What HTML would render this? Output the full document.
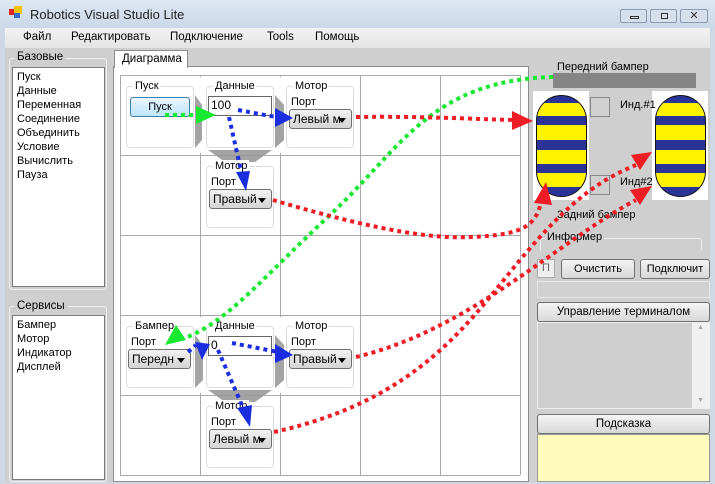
<!DOCTYPE html>
<html><head><meta charset="utf-8"><style>
*{margin:0;padding:0;box-sizing:border-box}
body{width:715px;height:484px;overflow:hidden;background:#cfd9e6;font-family:"Liberation Sans","DejaVu Sans",sans-serif;font-size:11px;color:#000;position:relative}
.a{position:absolute}
.title{left:0;top:0;width:715px;height:30px;background:linear-gradient(#dfe8f3,#c9d7e8)}
.menu{left:5px;top:28px;width:705px;height:20px;background:linear-gradient(#f3f3f3,#e4e4e4)}
.menu span{position:absolute;top:3px;font-size:11.5px}
.body{left:5px;top:48px;width:705px;height:434px;background:#cfcfcf}
.grp{border:1px solid #f0f0f0;border-radius:3px}
.list{background:#fff;border:1px solid #7a7a7a;padding:2px 4px;line-height:14px;font-size:11px}
.blk{background:#fff;border:1px solid #dcdcdc;border-radius:4px}
.cb{height:20px;border:1px solid #707070;border-radius:3px;background:linear-gradient(#f2f2f2,#d4d4d4);font-size:12px;padding:2px 3px;white-space:nowrap;overflow:hidden}
.cb:after{content:"";position:absolute;right:5px;top:8px;border:4px solid transparent;border-top:5px solid #000}
.btn{height:20px;border:1px solid #707070;border-radius:3px;background:linear-gradient(#f4f4f4,#d8d8d8);text-align:center;font-size:11px;line-height:18px}
</style></head><body>
<div class="a title"></div>
<div class="a" style="left:9px;top:9px;width:6px;height:6px;background:#d22"></div>
<div class="a" style="left:14px;top:6px;width:8px;height:8px;background:#f5c400"></div>
<div class="a" style="left:14px;top:13px;width:6px;height:5px;background:#3a6bd0"></div>
<div class="a" style="left:30px;top:7px;font-size:13px;color:#222">Robotics Visual Studio Lite</div>
<div class="a" style="left:620px;top:9px;width:27px;height:14px;border:1px solid #8a9ab0;border-radius:2px;background:#d6e0ec"><div class="a" style="left:9px;top:6px;width:9px;height:3px;border:1px solid #333"></div></div>
<div class="a" style="left:650px;top:9px;width:27px;height:14px;border:1px solid #8a9ab0;border-radius:2px;background:#d6e0ec"><div class="a" style="left:10px;top:3px;width:7px;height:6px;border:1px solid #333"></div></div>
<div class="a" style="left:680px;top:9px;width:28px;height:14px;border:1px solid #8a9ab0;border-radius:2px;background:#d6e0ec;text-align:center;font-size:11px;line-height:12px;color:#333">✕</div>
<div class="a menu"><span style="left:18px">Файл</span><span style="left:66px">Редактировать</span><span style="left:165px">Подключение</span><span style="left:262px">Tools</span><span style="left:310px">Помощь</span></div>
<div class="a body"></div>
<div class="a grp" style="left:9px;top:58px;width:98px;height:232px"></div>
<div class="a" style="left:14px;top:51px;background:#cfcfcf;padding:0 3px;font-size:11.5px">Базовые</div>
<div class="a list" style="left:12px;top:67px;width:93px;height:220px">Пуск<br>Данные<br>Переменная<br>Соединение<br>Объединить<br>Условие<br>Вычислить<br>Пауза</div>
<div class="a grp" style="left:9px;top:306px;width:98px;height:176px"></div>
<div class="a" style="left:14px;top:300px;background:#cfcfcf;padding:0 3px;font-size:11.5px">Сервисы</div>
<div class="a list" style="left:12px;top:315px;width:93px;height:165px">Бампер<br>Мотор<br>Индикатор<br>Дисплей</div>
<div class="a" style="left:113px;top:66px;width:416px;height:416px;background:#fff;border:1px solid #8c8c8c"></div>
<div class="a" style="left:114px;top:50px;width:74px;height:18px;background:#fff;border:1px solid #8c8c8c;border-bottom:none;padding:2px 0 0 7px;font-size:11.5px">Диаграмма</div>
<svg class="a" style="left:0;top:0" width="715" height="484">
<g stroke="#a8a8a8" stroke-width="1" fill="none">
<path d="M120.5 75V475M200.5 75V475M280.5 75V475M360.5 75V475M440.5 75V475M520.5 75V475M120 75.5H520M120 155.5H520M120 235.5H520M120 315.5H520M120 395.5H520M120 475.5H520"/>
</g>
<rect x="122" y="77" width="236" height="76" fill="#fff"/>
<rect x="202" y="157" width="76" height="76" fill="#fff"/>
<rect x="122" y="317" width="236" height="76" fill="#fff"/>
<rect x="202" y="397" width="76" height="76" fill="#fff"/>
<g fill="#9a9a9a" opacity=".9">
<path d="M195 95L202 105 202 140 195 148Z"/><path d="M275 95L284 105 284 140 275 148Z"/>
<path d="M208 150H272L255 162H225Z"/>
<path d="M195 335L203 345 203 380 195 388Z"/><path d="M275 335L284 345 284 380 275 388Z"/>
<path d="M208 390H272L255 402H225Z"/>
</g>
</svg>
<div class="a blk" style="left:126px;top:86px;width:68px;height:62px"></div>
<div class="a" style="left:133px;top:80px;background:#fff;padding:0 2px">Пуск</div>
<div class="a btn" style="left:130px;top:97px;width:60px;border-color:#3c7fb1;background:linear-gradient(#eaf6fd,#bde6fd)">Пуск</div>
<div class="a blk" style="left:206px;top:86px;width:68px;height:62px"></div>
<div class="a" style="left:213px;top:80px;background:#fff;padding:0 2px">Данные</div>
<div class="a" style="left:208px;top:96px;width:64px;height:20px;border:1px solid #666;padding:1px 2px;font-size:12px">100</div>
<div class="a blk" style="left:286px;top:86px;width:68px;height:62px"></div>
<div class="a" style="left:293px;top:80px;background:#fff;padding:0 2px">Мотор</div>
<div class="a" style="left:291px;top:96px">Порт</div>
<div class="a cb" style="left:289px;top:109px;width:63px">Левый м</div>
<div class="a blk" style="left:206px;top:166px;width:68px;height:62px"></div>
<div class="a" style="left:213px;top:160px;background:#fff;padding:0 2px">Мотор</div>
<div class="a" style="left:211px;top:176px">Порт</div>
<div class="a cb" style="left:209px;top:189px;width:63px">Правый</div>
<div class="a blk" style="left:126px;top:326px;width:68px;height:62px"></div>
<div class="a" style="left:133px;top:320px;background:#fff;padding:0 2px">Бампер</div>
<div class="a" style="left:131px;top:336px">Порт</div>
<div class="a cb" style="left:128px;top:349px;width:63px">Передн</div>
<div class="a blk" style="left:206px;top:326px;width:68px;height:62px"></div>
<div class="a" style="left:213px;top:320px;background:#fff;padding:0 2px">Данные</div>
<div class="a" style="left:208px;top:336px;width:64px;height:20px;border:1px solid #666;padding:1px 2px;font-size:12px">0</div>
<div class="a blk" style="left:286px;top:326px;width:68px;height:62px"></div>
<div class="a" style="left:293px;top:320px;background:#fff;padding:0 2px">Мотор</div>
<div class="a" style="left:291px;top:336px">Порт</div>
<div class="a cb" style="left:289px;top:349px;width:63px">Правый</div>
<div class="a blk" style="left:206px;top:406px;width:68px;height:62px"></div>
<div class="a" style="left:213px;top:400px;background:#fff;padding:0 2px">Мотор</div>
<div class="a" style="left:211px;top:416px">Порт</div>
<div class="a cb" style="left:209px;top:429px;width:63px">Левый м</div>
<div class="a" style="left:557px;top:61px">Передний бампер</div>
<div class="a" style="left:553px;top:73px;width:143px;height:15px;background:#858585"></div>
<svg class="a" style="left:0;top:0" width="715" height="484">
<defs><clipPath id="r"><rect x="536.5" y="95.5" width="50" height="101" rx="25"/></clipPath>
<clipPath id="r2"><rect x="655.5" y="95.5" width="50" height="101" rx="25"/></clipPath>
<g id="st"><rect x="0" y="0" width="715" height="484" fill="#2b3398"/>
<g fill="#fff200"><rect x="0" y="103" width="715" height="13"/><rect x="0" y="125" width="715" height="15"/><rect x="0" y="150" width="715" height="14"/><rect x="0" y="173" width="715" height="14"/></g></g></defs>
<rect x="533" y="91" width="56" height="109" fill="#fff"/>
<rect x="652" y="91" width="56" height="109" fill="#fff"/>
<use href="#st" clip-path="url(#r)"/><use href="#st" clip-path="url(#r2)"/>
<rect x="536.5" y="95.5" width="50" height="101" rx="25" fill="none" stroke="#111"/>
<rect x="655.5" y="95.5" width="50" height="101" rx="25" fill="none" stroke="#111"/>
<rect x="590.5" y="97.5" width="19" height="19" fill="#d0d0d0" stroke="#888"/>
<rect x="590.5" y="175.5" width="19" height="19" fill="#d0d0d0" stroke="#888"/>
</svg>
<div class="a" style="left:620px;top:99px">Инд.#1</div>
<div class="a" style="left:620px;top:176px">Инд#2</div>
<div class="a" style="left:557px;top:209px">Задний бампер</div>
<div class="a grp" style="left:540px;top:238px;width:162px;height:14px;border-bottom:none;border-color:#eee"></div>
<div class="a" style="left:545px;top:231px;background:#cfcfcf;padding:0 2px">Информер</div>
<div class="a" style="left:537px;top:259px;width:18px;height:19px;border:1px solid #aaa;background:#eee;color:#666;text-align:center;line-height:17px">П</div>
<div class="a btn" style="left:561px;top:259px;width:74px">Очистить</div>
<div class="a btn" style="left:640px;top:259px;width:70px">Подключит</div>
<div class="a" style="left:537px;top:281px;width:173px;height:17px;border:1px solid #e8e8e8;background:#d0d0d0"></div>
<div class="a btn" style="left:537px;top:302px;width:173px;font-size:11.5px">Управление терминалом</div>
<div class="a" style="left:537px;top:322px;width:173px;height:87px;border:1px solid #eee;background:#cfcfcf"></div>
<div class="a" style="left:692px;top:323px;width:17px;height:85px;background:#f0f0f0;color:#aaa;font-size:7px;text-align:center;line-height:10px">▲<div style="position:absolute;bottom:2px;width:17px">▼</div></div>
<div class="a btn" style="left:537px;top:414px;width:173px;font-size:11.5px">Подсказка</div>
<div class="a" style="left:537px;top:434px;width:173px;height:48px;background:#fffbbd;border:1px solid #999"></div>
<svg class="a" style="left:0;top:0" width="715" height="484">
<g fill="none" stroke-width="4" stroke-dasharray="4 4">
<path d="M165 115H198" stroke="#18e830"/>
<path d="M553 77C430 80 400 150 330 215S230 320 185 338" stroke="#18e830"/>
<path d="M238 110C255 113 268 116 278 117" stroke="#1a2ee0"/>
<path d="M229 117L242 175" stroke="#1a2ee0"/>
<path d="M188 352L196 345" stroke="#1a2ee0"/>
<path d="M232 343L278 352" stroke="#1a2ee0"/>
<path d="M218 350L244 410" stroke="#1a2ee0"/>
<path d="M356 117C420 116 470 119 515 120" stroke="#ee1c24"/>
<path d="M273 200C340 220 420 240 470 237C525 235 535 225 541 203" stroke="#ee1c24"/>
<path d="M356 357C470 330 560 240 636 200" stroke="#ee1c24"/>
<path d="M274 432C420 400 470 320 520 260S600 180 636 165" stroke="#ee1c24"/>
</g>
<g stroke="none">
<path d="M196 106L216 115 196 124Z" fill="#18e830"/>
<path d="M165 345L176 325 186 340Z" fill="#18e830"/>
<path d="M275 108L293 118 275 127Z" fill="#1a2ee0"/>
<path d="M236 172L250 171 246 191Z" fill="#1a2ee0"/>
<path d="M195 342L210 344 202 360Z" fill="#1a2ee0"/>
<path d="M275 344L293 355 275 363Z" fill="#1a2ee0"/>
<path d="M237 408L252 405 250 427Z" fill="#1a2ee0"/>
<path d="M512 111L533 121 512 130Z" fill="#ee1c24"/>
<path d="M534 203L546 182 552 205Z" fill="#ee1c24"/>
<path d="M630 190L652 186 640 205Z" fill="#ee1c24"/>
<path d="M631 155L652 152 640 170Z" fill="#ee1c24"/>
</g>
</svg>
</body></html>
